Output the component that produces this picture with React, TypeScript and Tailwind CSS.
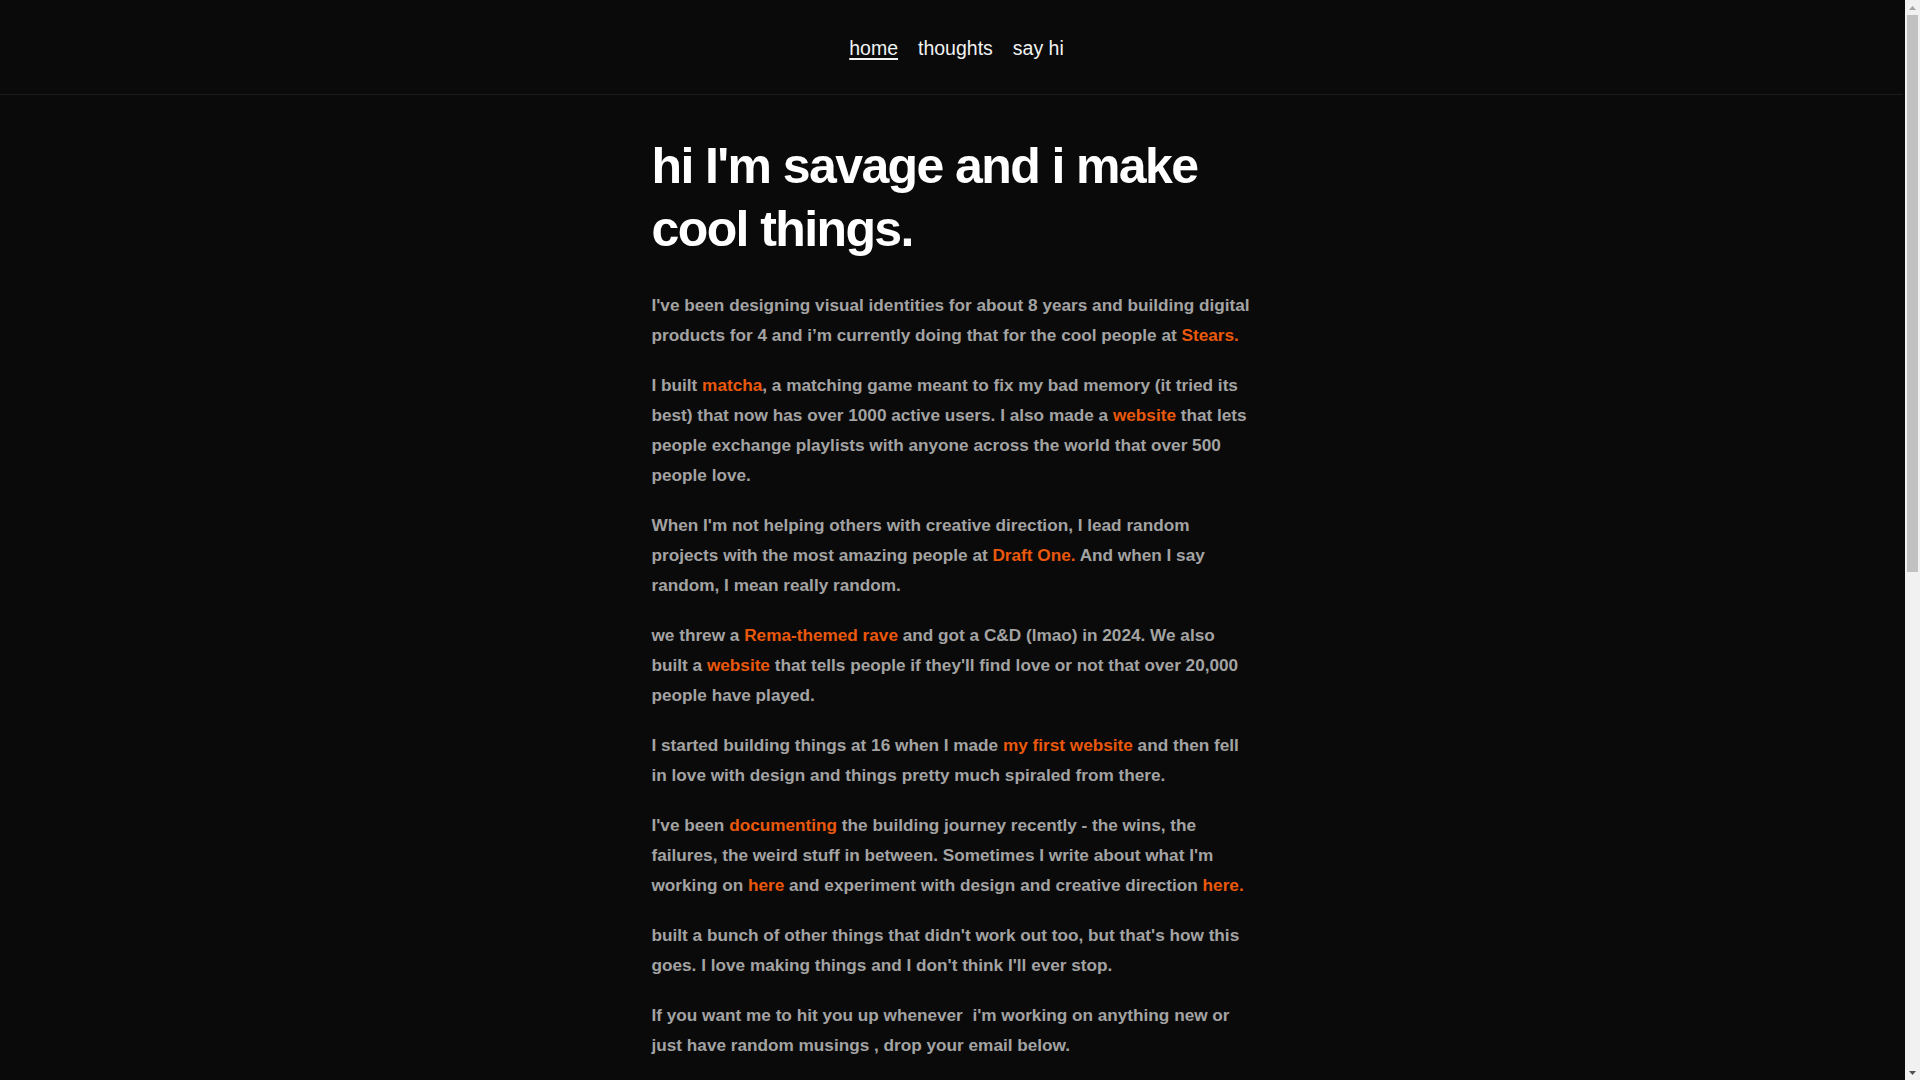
import React from "react";

const A = ({ children }: { children: React.ReactNode }) => (
  <a href="#" className="text-[#ea580c] no-underline">
    {children}
  </a>
);

function FakeScrollbar() {
  return (
    <div className="fixed right-0 top-0 flex h-screen w-[15px] flex-col items-center bg-[#f1f1f1]">
      <div className="flex h-[15px] w-full items-center justify-center">
        <svg width="7" height="4" viewBox="0 0 7 4">
          <polygon points="3.5,0 7,4 0,4" fill="#a3a3a3" />
        </svg>
      </div>
      <div className="h-[557px] w-[11px] bg-[#c1c1c1]" />
      <div className="flex-1" />
      <div className="flex h-[15px] w-full items-center justify-center">
        <svg width="7" height="4" viewBox="0 0 7 4">
          <polygon points="0,0 7,0 3.5,4" fill="#505050" />
        </svg>
      </div>
    </div>
  );
}

export default function App() {
  return (
    <div
      className="min-h-[2035px] bg-[#0a0a0a] pr-[17px] text-[#f2f2f2]"
      style={{ fontFamily: '"Liberation Sans", Arial, sans-serif' }}
    >
      <header className="border-b border-[#1c1c1c] pt-[34px] pb-[32px]">
        <nav className="ml-[10px] flex justify-center gap-[20px] text-[19.5px] leading-[28px]">
          <a href="#" className="text-[#f2f2f2] underline underline-offset-[3px] decoration-[1.5px]">
            home
          </a>
          <a href="#" className="text-[#f2f2f2]">
            thoughts
          </a>
          <a href="#" className="text-[#f2f2f2]">
            say hi
          </a>
        </nav>
      </header>
      <main className="mx-auto w-[600px] pt-[40px]">
        <h1 className="text-[50px] font-bold leading-[63px] tracking-[-0.032em] text-white">
          hi I'm savage and i make cool things.
        </h1>
        <div className="mt-[29px] flex flex-col gap-[20px] text-[17.2px] font-bold leading-[30px] text-[#a3a3a3]">
          <p>
            I've been designing visual identities for about 8 years and building digital products for 4 and i’m currently doing that for the cool people at <A>Stears.</A>
          </p>
          <p>
            I built <A>matcha</A>, a matching game meant to fix my bad memory (it tried its best) that now has over 1000 active users. I also made a <A>website</A> that lets people exchange playlists with anyone across the world that over 500 people love.
          </p>
          <p>
            When I'm not helping others with creative direction, I lead random projects with the most amazing people at <A>Draft One.</A> And when I say random, I mean really random.
          </p>
          <p>
            we threw a <A>Rema-themed rave</A> and got a C&amp;D (lmao) in 2024. We also built a <A>website</A> that tells people if they'll find love or not that over 20,000 people have played.
          </p>
          <p>
            I started building things at 16 when I made <A>my first website</A> and then fell in love with design and things pretty much spiraled from there.
          </p>
          <p>
            I've been <A>documenting</A> the building journey recently - the wins, the failures, the weird stuff in between. Sometimes I write about what I'm working on <A>here</A> and experiment with design and creative direction <A>here.</A>
          </p>
          <p>
            built a bunch of other things that didn't work out too, but that's how this goes. I love making things and I don't think I'll ever stop.
          </p>
          <p>
            If you want me to hit you up whenever{"\u00a0"} i'm working on anything new or just have random musings , drop your email below.
          </p>
        </div>
        <form className="mt-[32px] flex gap-3" onSubmit={(e) => e.preventDefault()}>
          <input
            type="email"
            placeholder="your email"
            className="h-[44px] flex-1 rounded-md border border-[#262626] bg-[#111111] px-4 text-[16px] text-white outline-none"
          />
          <button className="h-[44px] rounded-md bg-[#ea580c] px-5 text-[16px] font-bold text-white">
            subscribe
          </button>
        </form>
      </main>
      <FakeScrollbar />
    </div>
  );
}
